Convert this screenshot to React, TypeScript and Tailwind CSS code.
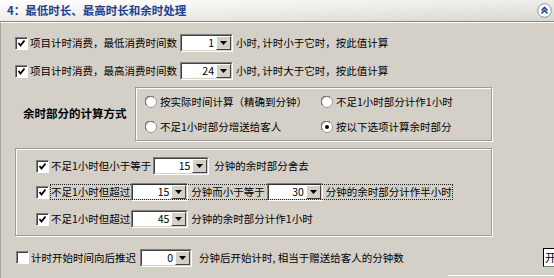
import React from "react";

const font = { fontFamily: '"Noto Sans CJK SC", "Noto Sans", sans-serif' };

const Check = ({ on }: { on?: boolean }) => (
  <span className="flex h-[13px] w-[13px] shrink-0 items-center justify-center border border-b-white border-l-[#808080] border-r-white border-t-[#808080] bg-white shadow-[inset_1px_1px_0_#404040]">
    {on && (
      <svg width="9" height="9" viewBox="0 0 9 9">
        <polyline points="1.5,4 3.5,6.5 7.5,1.5" fill="none" stroke="#000" strokeWidth="1.8" />
      </svg>
    )}
  </span>
);

const Radio = ({ on }: { on?: boolean }) => (
  <svg width="12" height="12" viewBox="0 0 12 12" className="shrink-0">
    <circle cx="6" cy="6" r="5.5" fill="#fff" stroke="#9a978f" />
    <path d="M1.5 9 A5 5 0 0 1 9 1.5" fill="none" stroke="#5f5d58" strokeWidth="1" />
    {on && <circle cx="6" cy="6" r="2" fill="#000" />}
  </svg>
);

const Select = ({ value, className }: { value: string; className: string }) => (
  <span
    className={
      "flex h-[18px] shrink-0 border border-b-white border-l-[#808080] border-r-white border-t-[#808080] " +
      className
    }
  >
    <span className="flex flex-1 border border-b-[#d4d0c8] border-l-[#404040] border-r-[#d4d0c8] border-t-[#404040] bg-white">
      <span className="flex-1 pr-[2px] text-right leading-[14px]">{value}</span>
      <span className="flex w-[15px] items-center justify-center border border-b-[#404040] border-l-white border-r-[#404040] border-t-white bg-[#d4d0c8]">
        <svg width="7" height="4" viewBox="0 0 7 4">
          <polygon points="0,0 7,0 3.5,4" fill="#000" />
        </svg>
      </span>
    </span>
  </span>
);

export default function App() {
  return (
    <div
      className="relative flex h-[278px] w-[554px] flex-col overflow-hidden bg-[#d4d0c8] text-[10.5px] text-black"
      style={font}
    >
      {/* title bar */}
      <div className="flex h-[22px] shrink-0 items-center justify-between border-b border-[#858580] bg-gradient-to-br from-white via-[#eeede9] to-[#d8d6d0] pl-[7px] pr-[2px]">
        <span className="text-[11.5px] font-bold text-[#1f3f8f]">4：最低时长、最高时长和余时处理</span>
        <svg width="15" height="15" viewBox="0 0 15 15">
          <circle cx="7.5" cy="7.5" r="6.8" fill="#fff" stroke="#8b93a8" />
          <polyline points="4.5,7.5 7.5,4.5 10.5,7.5" fill="none" stroke="#1f3f8f" strokeWidth="1.6" />
          <polyline points="4.5,10.5 7.5,7.5 10.5,10.5" fill="none" stroke="#1f3f8f" strokeWidth="1.6" />
        </svg>
      </div>

      <div className="flex flex-1 flex-col border-l border-t border-l-[#a6a29a] border-t-white pl-[14px]">
        {/* top rows */}
        <div className="mt-[11px] flex h-[18px] items-center">
          <Check on />
          <span className="ml-[2px] mr-[3px]">项目计时消费，最低消费时间数</span>
          <Select value="1" className="w-[53px]" />
          <span className="ml-[3px]">小时, 计时小于它时，按此值计算</span>
        </div>
        <div className="mt-[10px] flex h-[18px] items-center">
          <Check on />
          <span className="ml-[2px] mr-[3px]">项目计时消费，最高消费时间数</span>
          <Select value="24" className="w-[53px]" />
          <span className="ml-[3px]">小时, 计时大于它时，按此值计算</span>
        </div>

        {/* radio group */}
        <div className="mt-[7px] flex h-[54px] items-center">
          <span className="w-[120px] pl-[8px] text-[11.5px] font-bold">余时部分的计算方式</span>
          <div className="grid h-full w-[357px] grid-cols-[176px_1fr] content-start gap-y-[11px] border border-[#a09c94] pl-[9px] pt-[7px] shadow-[inset_1px_1px_0_#fff,1px_1px_0_#fff]">
            <label className="flex h-[14px] items-center gap-[3px]">
              <Radio />
              <span>按实际时间计算（精确到分钟）</span>
            </label>
            <label className="flex h-[14px] items-center gap-[3px]">
              <Radio />
              <span>不足1小时部分计作1小时</span>
            </label>
            <label className="flex h-[14px] items-center gap-[3px]">
              <Radio />
              <span>不足1小时部分增送给客人</span>
            </label>
            <label className="flex h-[14px] items-center gap-[3px]">
              <Radio on />
              <span>按以下选项计算余时部分</span>
            </label>
          </div>
        </div>

        {/* detail group */}
        <div className="mt-[7px] flex h-[88px] w-[477px] flex-col gap-[8px] border border-[#a09c94] pl-[20px] pt-[8px] shadow-[inset_1px_1px_0_#fff,1px_1px_0_#fff]">
          <div className="flex h-[18px] items-center">
            <Check on />
            <span className="ml-[2px] mr-[2px]">不足1小时但小于等于</span>
            <Select value="15" className="w-[56px]" />
            <span className="ml-[5px]">分钟的余时部分舍去</span>
          </div>
          <div className="flex h-[18px] items-center">
            <Check on />
            <span className="ml-[2px] flex h-[14px] items-center outline outline-1 outline-dotted outline-[#222]">
              <span className="mr-[1px]">不足1小时但超过</span>
              <Select value="15" className="w-[57px]" />
              <span className="ml-[3px] mr-[2px]">分钟而小于等于</span>
              <Select value="30" className="w-[56px]" />
              <span className="ml-[3px]">分钟的余时部分计作半小时</span>
            </span>
          </div>
          <div className="mt-px flex h-[18px] items-center">
            <Check on />
            <span className="ml-[2px] mr-[1px]">不足1小时但超过</span>
            <Select value="45" className="w-[57px]" />
            <span className="ml-[3px]">分钟的余时部分计作1小时</span>
          </div>
        </div>

        {/* bottom row */}
        <div className="mt-[12px] flex h-[19px] items-center pl-px">
          <Check />
          <span className="ml-[2px] mr-[4px]">计时开始时间向后推迟</span>
          <Select value="0" className="w-[52px]" />
          <span className="ml-[7px]">分钟后开始计时, 相当于赠送给客人的分钟数</span>
          <span className="ml-auto mr-[-40px] flex h-[19px] w-[51px] shrink-0 items-center border border-b-[#808080] border-l-black border-r-[#808080] border-t-black bg-white pl-[1px] text-[11px]">
            开
          </span>
        </div>
        <div className="ml-[433px] mt-[8px] h-px bg-white" />
      </div>
    </div>
  );
}
